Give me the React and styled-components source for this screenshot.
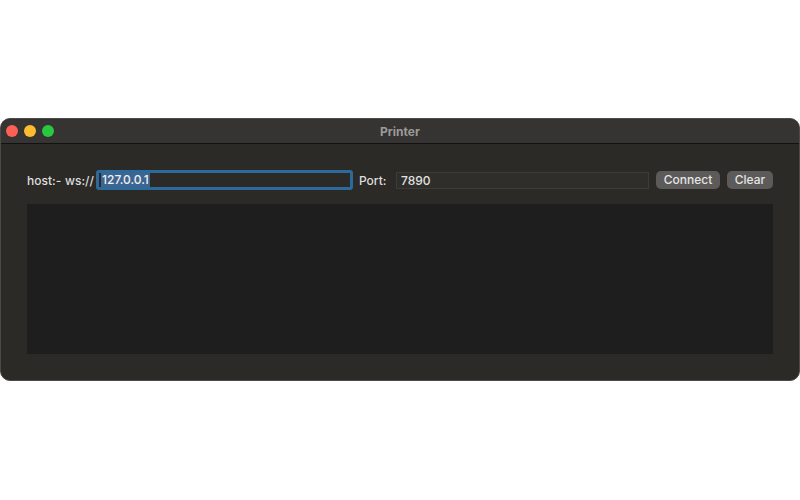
import React from 'react';
import styled, { createGlobalStyle } from 'styled-components';

const GlobalStyle = createGlobalStyle`
  html, body {
    margin: 0;
    padding: 0;
    background: #ffffff;
  }
  body {
    font-family: Inter, "Liberation Sans", Arial, sans-serif;
  }
`;

const Page = styled.div`
  width: 800px;
  height: 500px;
  padding-top: 118px;
  box-sizing: border-box;
`;

const Window = styled.div`
  width: 800px;
  height: 263px;
  box-sizing: border-box;
  background: #2c2a26;
  border-radius: 10px;
  border: 1px solid #4a4a48;
  overflow: hidden;
  display: flex;
  flex-direction: column;
`;

const TitleBar = styled.div`
  height: 24px;
  flex: none;
  display: flex;
  align-items: center;
  position: relative;
  background: #353432;
  border-bottom: 1px solid #121212;
  padding-left: 5px;
  gap: 6px;
`;

const Light = styled.span`
  width: 12px;
  height: 12px;
  border-radius: 50%;
  background: ${p => p.color};
`;

const Title = styled.div`
  position: absolute;
  left: 0;
  right: 0;
  text-align: center;
  font-size: 12px;
  font-weight: 700;
  color: #9b9b99;
  pointer-events: none;
`;

const Body = styled.div`
  flex: 1;
  display: flex;
  flex-direction: column;
  padding: 26px 26px 26px 26px;
  gap: 14px;
`;

const Row = styled.div`
  display: flex;
  align-items: center;
  height: 20px;
  font-size: 12px;
  font-weight: 500;
  color: #dedede;
`;

const Label = styled.span`
  flex: none;
  width: ${p => p.w}px;
  white-space: nowrap;
`;

const FocusInput = styled.div`
  flex: none;
  width: 257px;
  height: 20px;
  box-sizing: border-box;
  border: 3px solid #2d6a9c;
  border-radius: 3px;
  background: #2b2a27;
  display: flex;
  align-items: center;
  padding-left: 2px;
  margin-right: 6px;
`;

const Selected = styled.span`
  background: #3d6592;
  color: #f0f0f0;
  padding: 0 1px;
  line-height: 14px;
`;

const PlainInput = styled.div`
  flex: none;
  width: 253px;
  height: 17px;
  box-sizing: border-box;
  border: 1px solid #3d3c39;
  background: #2f2e2b;
  display: flex;
  align-items: center;
  padding-left: 4px;
  margin-right: 7px;
  color: #e2e2e2;
`;

const Button = styled.button`
  flex: none;
  width: ${p => p.w}px;
  height: 18px;
  padding: 0;
  margin-right: ${p => p.gap || 0}px;
  border: none;
  border-radius: 5px;
  background: #5c5b59;
  color: #e4e4e4;
  font-family: inherit;
  font-size: 12px;
  font-weight: 500;
  line-height: 18px;
`;

const Log = styled.div`
  height: 150px;
  background: #1e1e1e;
`;

export default function App() {
  return (
    <>
      <GlobalStyle />
      <Page>
        <Window>
          <TitleBar>
            <Light color="#fe5f57" />
            <Light color="#febc2e" />
            <Light color="#28c840" />
            <Title>Printer</Title>
          </TitleBar>
          <Body>
            <Row>
              <Label w={38}>host:-</Label>
              <Label w={31}>ws://</Label>
              <FocusInput>
                <Selected>127.0.0.1</Selected>
              </FocusInput>
              <Label w={37}>Port:</Label>
              <PlainInput>7890</PlainInput>
              <Button w={64} gap={7}>Connect</Button>
              <Button w={46}>Clear</Button>
            </Row>
            <Log />
          </Body>
        </Window>
      </Page>
    </>
  );
}
